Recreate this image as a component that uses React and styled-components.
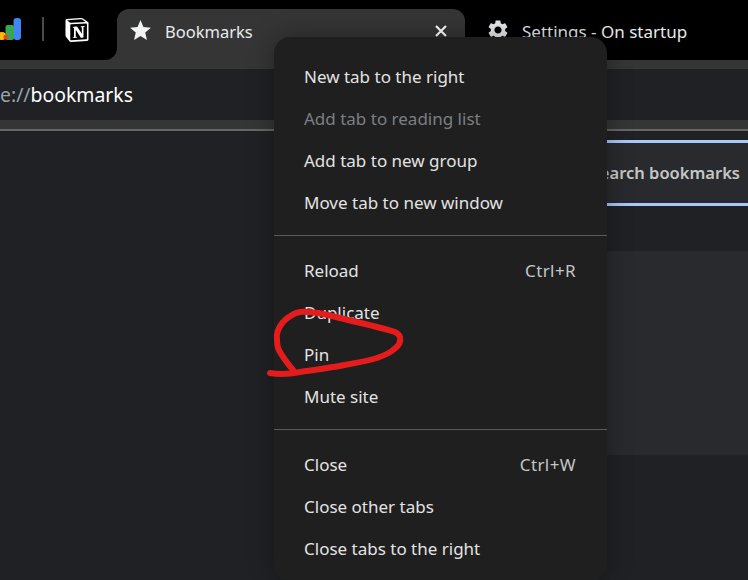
import React from 'react';
import styled, { createGlobalStyle } from 'styled-components';
import { MdSettings, MdStar } from 'react-icons/md';
import { SiNotion } from 'react-icons/si';

const menuGroups = [
  [
    { label: 'New tab to the right' },
    { label: 'Add tab to reading list', disabled: true },
    { label: 'Add tab to new group' },
    { label: 'Move tab to new window' },
  ],
  [
    { label: 'Reload', shortcut: 'Ctrl+R' },
    { label: 'Duplicate' },
    { label: 'Pin' },
    { label: 'Mute site' },
  ],
  [
    { label: 'Close', shortcut: 'Ctrl+W' },
    { label: 'Close other tabs' },
    { label: 'Close tabs to the right' },
  ],
];

function AnalyticsIcon() {
  return (
    <svg width="21" height="22" viewBox="0 0 21 22">
      <rect x="13.5" y="0" width="7.5" height="22" rx="3" fill="#4285f4" />
      <rect x="5.5" y="7" width="8.5" height="15" rx="2" fill="#34a853" />
      <circle cx="2" cy="18" r="4" fill="#fbbc04" />
      <circle cx="6" cy="19" r="2.5" fill="#ea4335" />
    </svg>
  );
}

function CloseIcon() {
  return (
    <svg width="12" height="12" viewBox="0 0 12 12">
      <path d="M1 1 L11 11 M11 1 L1 11" fill="none" stroke="#fff" strokeWidth="2.2" />
    </svg>
  );
}

function App() {
  return (
    <Screen>
      <GlobalStyle />
      <TabStrip>
        <PinnedArea>
          <AnalyticsIcon />
          <PinnedDivider />
          <SiNotion size={24} color="#fff" />
        </PinnedArea>
        <ActiveTabSlot>
          <ActiveTab>
            <MdStar size={25} color="#f1f3f4" />
            <ActiveTabTitle>Bookmarks</ActiveTabTitle>
            <CloseIcon />
          </ActiveTab>
        </ActiveTabSlot>
        <OtherTabs>
          <MdSettings size={24} color="#e8eaed" />
          <OtherTabTitle>Settings - On startup</OtherTabTitle>
        </OtherTabs>
      </TabStrip>
      <AddressBar>
        <AddressScheme>e://</AddressScheme>bookmarks
      </AddressBar>
      <BookmarksBar />
      <Page>
        <SearchBox>Search bookmarks</SearchBox>
        <ListCard />
      </Page>
      <ContextMenu>
        {menuGroups.map((group, i) => (
          <MenuGroup key={i}>
            {group.map((item) => (
              <MenuItem key={item.label} $disabled={item.disabled}>
                <span>{item.label}</span>
                {item.shortcut && <Shortcut>{item.shortcut}</Shortcut>}
              </MenuItem>
            ))}
          </MenuGroup>
        ))}
      </ContextMenu>
      <Scribble viewBox="0 0 748 580">
        <path d="M270 373 C282 375 290 374 300 372 C312 370 322 369 333 367 C350 364 364 362 377 358 C385 355 390 353 393 350 C399 346 401 341 400 337 C399 334 397 333 395 332 C380 327 360 323 340 318 C325 314 312 311 300 312 C294 313 288 317 283 322 C278 328 276 334 277 340 C277 345 278 349 280 352 C284 359 288 364 293 370" />
      </Scribble>
    </Screen>
  );
}

export default App;

const GlobalStyle = createGlobalStyle`
  html, body {
    margin: 0;
    background: #202124;
  }
`;

const Screen = styled.div`
  position: relative;
  width: 748px;
  height: 580px;
  overflow: hidden;
  display: flex;
  flex-direction: column;
  background: #202124;
  color: #fff;
  font-family: "Noto Sans", "Open Sans", sans-serif;
`;

const TabStrip = styled.div`
  display: flex;
  height: 60px;
  flex-shrink: 0;
  background: #353535;
`;

const PinnedArea = styled.div`
  width: 117px;
  display: flex;
  align-items: center;
  background: #000;
  border-bottom-right-radius: 12px;
  padding-bottom: 2px;
  box-sizing: border-box;

  svg:last-child {
    margin-left: 21px;
    margin-top: 1px;
  }
`;

const PinnedDivider = styled.div`
  width: 2px;
  height: 24px;
  margin-left: 21px;
  background: #4a4a4a;
`;

const ActiveTabSlot = styled.div`
  width: 348px;
  padding-top: 9px;
  box-sizing: border-box;
  background: linear-gradient(#000 20px, #353535 20px);
`;

const ActiveTab = styled.div`
  height: 51px;
  padding: 0 18px 8px 11px;
  box-sizing: border-box;
  display: flex;
  align-items: center;
  gap: 12px;
  background: #353535;
  border-radius: 12px 12px 0 0;

  svg:last-child {
    margin-left: auto;
  }
`;

const TabTitle = styled.span`
  font-size: 16.5px;
  color: #e8eaed;
  white-space: nowrap;
`;

const ActiveTabTitle = styled(TabTitle)`
  margin-top: 2px;
`;

const OtherTabTitle = styled(TabTitle)`
  font-size: 17px;
  margin-top: 2px;
`;

const OtherTabs = styled.div`
  flex: 1;
  display: flex;
  align-items: center;
  gap: 12px;
  padding-left: 21px;
  background: #000;
  border-bottom-left-radius: 12px;
`;

const AddressBar = styled.div`
  height: 51px;
  margin-top: 9px;
  display: flex;
  align-items: center;
  flex-shrink: 0;
  background: #202124;
  font-size: 19.4px;
  color: #fff;
  box-shadow: 0 -9px 0 #353535;
`;

const AddressScheme = styled.span`
  color: #9aa0a6;
`;

const BookmarksBar = styled.div`
  height: 9px;
  flex-shrink: 0;
  background: #353535;
  border-bottom: 2px solid #666;
`;

const Page = styled.div`
  flex: 1;
  display: flex;
  flex-direction: column;
  align-items: flex-end;
  padding-top: 9px;
`;

const SearchBox = styled.div`
  width: 348px;
  height: 66px;
  padding: 0 8px 2px 0;
  box-sizing: border-box;
  display: flex;
  align-items: center;
  justify-content: flex-end;
  background: #292a2d;
  border-top: 3px solid #a8c7fa;
  border-bottom: 3px solid #a8c7fa;
  font-size: 16.5px;
  font-weight: 600;
  color: #c4c7c5;
`;

const ListCard = styled.div`
  width: 348px;
  height: 204px;
  margin-top: 45px;
  background: #292a2d;
`;

const ContextMenu = styled.div`
  position: absolute;
  left: 274px;
  top: 37px;
  width: 333px;
  padding-top: 19px;
  background: #1f1f1f;
  border-radius: 16px;
  box-shadow: 0 0 24px rgba(0, 0, 0, 0.35);
`;

const MenuGroup = styled.div`
  padding-bottom: 11px;

  & + & {
    padding-top: 14px;
    border-top: 1px solid #5a5a5a;
  }
`;

const MenuItem = styled.div`
  height: 42px;
  padding: 0 31px 2px 30px;
  box-sizing: border-box;
  display: flex;
  align-items: center;
  justify-content: space-between;
  font-size: 17px;
  color: ${(props) => (props.$disabled ? '#7b7f83' : '#e3e3e3')};
`;

const Shortcut = styled.span`
  letter-spacing: 0.4px;
  color: #c4c7c5;
`;

const Scribble = styled.svg`
  position: absolute;
  inset: 0;
  width: 748px;
  height: 580px;
  pointer-events: none;

  path {
    fill: none;
    stroke: #e51c1c;
    stroke-width: 6;
    stroke-linecap: round;
    stroke-linejoin: round;
  }
`;
